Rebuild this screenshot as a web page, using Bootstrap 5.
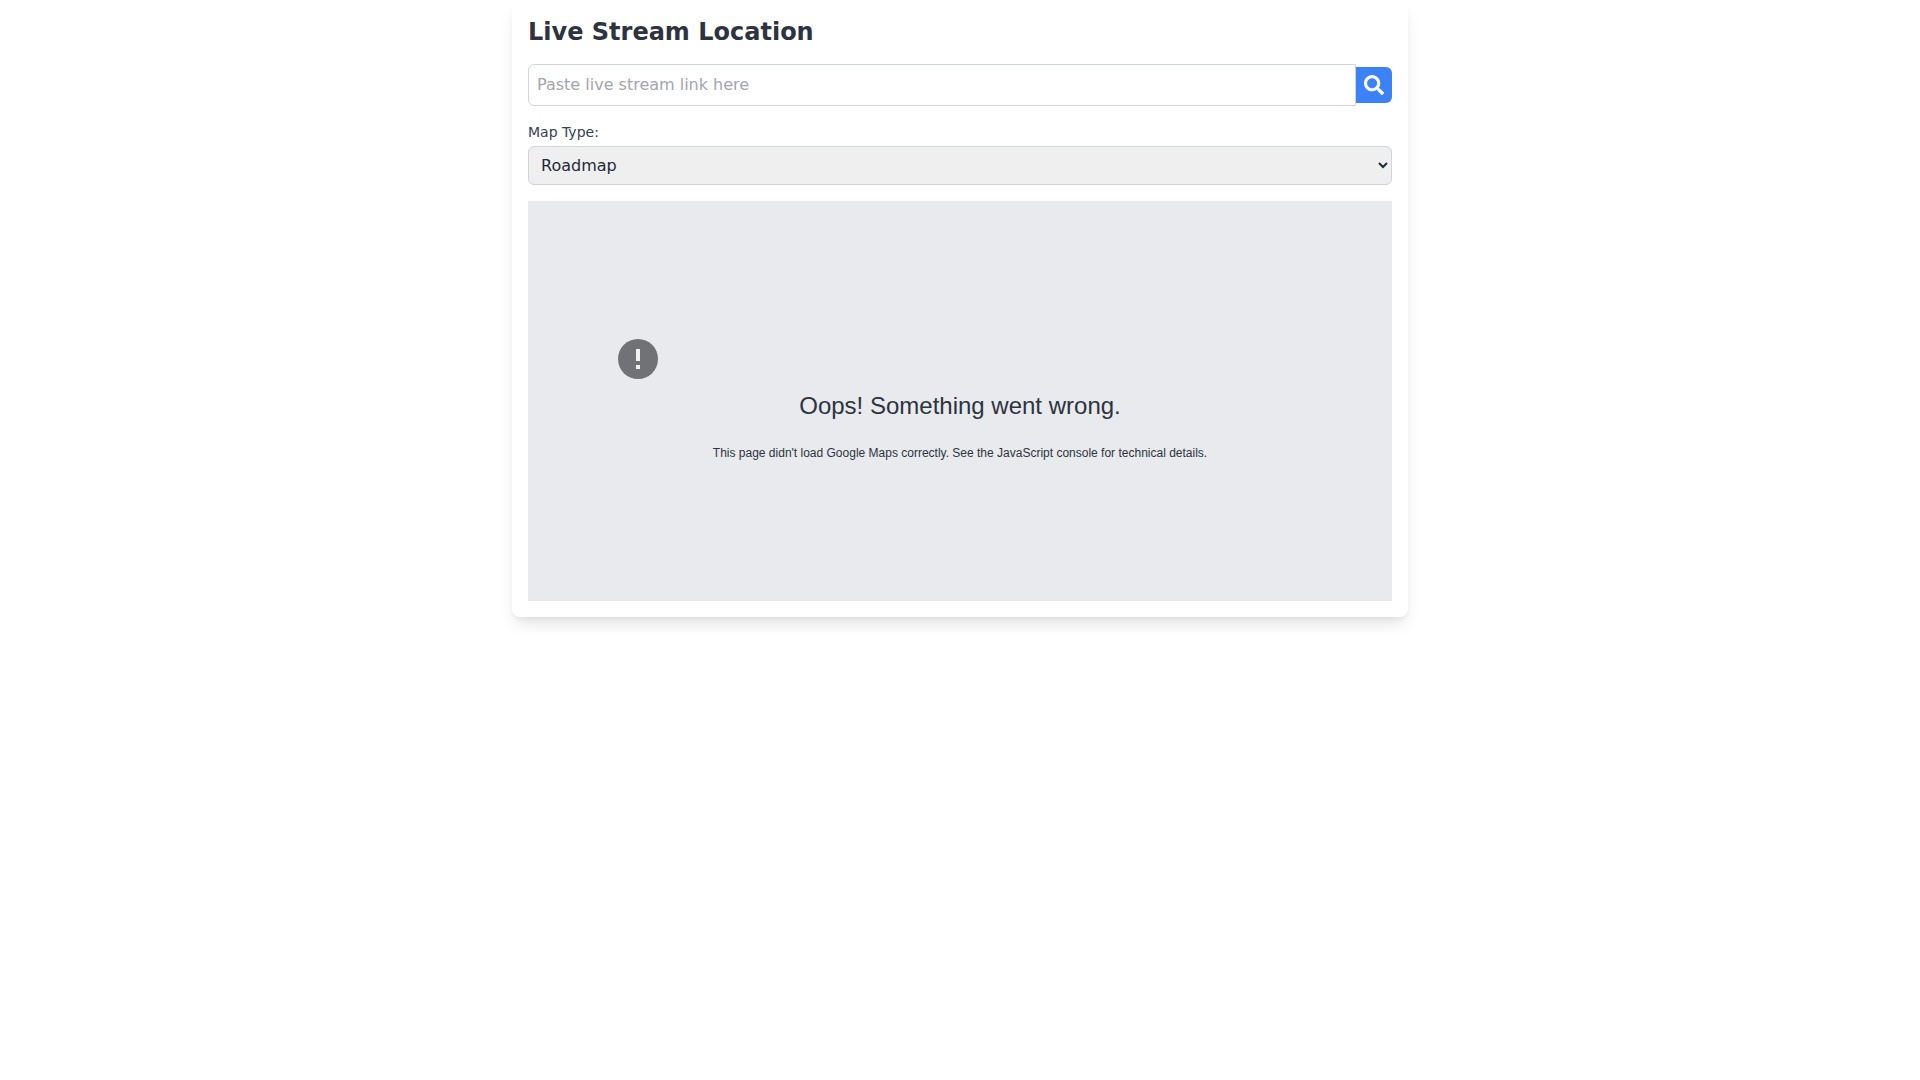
<!DOCTYPE html>
<html lang="en">
<head>
<meta charset="utf-8">
<meta name="viewport" content="width=device-width, initial-scale=1">
<title>Live Stream Location</title>
<link rel="stylesheet" href="https://cdn.jsdelivr.net/npm/bootstrap@5.3.0/dist/css/bootstrap.min.css">
<style>
body { font-family: "DejaVu Sans", sans-serif; font-size: 16px; line-height: 24px; color: #2d333f; background: #fff; }
.stream-panel { max-width: 896px; border-radius: 8px; box-shadow: 0 10px 15px -3px rgba(0,0,0,.1), 0 4px 6px -2px rgba(0,0,0,.05); }
.stream-title { font-size: 24px; line-height: 32px; }
.stream-link { padding: 8px; border: 1px solid #d1d5db; border-radius: 6px 0 0 6px; color: inherit; min-width: 0; }
.stream-link::placeholder { color: #a3a6ac; opacity: 1; }
.stream-search { padding: 8px; border-radius: 0 6px 6px 0; background: #3b82f6; color: #fff; line-height: 20px; }
.type-label { font-size: 14px; line-height: 20px; color: #374151; }
.type-select { height: 39px; padding: 8px; border: 1px solid #d1d5db; border-radius: 6px; background-color: #efefef; color: #1f2937; }
.map-area { height: 400px; background: #e8eaed; font-family: "Liberation Sans", sans-serif; }
.map-error { padding: 0 10% 6px; }
.error-title { font-size: 24px; line-height: 36px; margin: 5px 0 20px; }
.error-text { font-size: 12px; line-height: 18px; }
</style>
<script src="https://cdn.jsdelivr.net/npm/bootstrap@5.3.0/dist/js/bootstrap.bundle.min.js"></script>
</head>
<body class="min-vh-100">
<main class="stream-panel mx-auto p-3 bg-white">
  <h1 class="stream-title fw-bold mb-3">Live Stream Location</h1>
  <form class="d-flex align-items-center mb-3">
    <input class="stream-link flex-grow-1" type="text" placeholder="Paste live stream link here" aria-label="Live stream link">
    <button class="stream-search d-flex border-0" type="button" aria-label="Search">
      <svg width="20" height="20" viewBox="0 0 512 512" fill="currentColor" aria-hidden="true"><path d="M505 442.7L405.3 343c-4.5-4.5-10.6-7-17-7H372c27.6-35.3 44-79.7 44-128C416 93.1 322.9 0 208 0S0 93.1 0 208s93.1 208 208 208c48.3 0 92.7-16.4 128-44v16.3c0 6.4 2.5 12.5 7 17l99.7 99.7c9.4 9.4 24.6 9.4 33.9 0l28.3-28.3c9.4-9.4 9.4-24.6.1-34zM208 336c-70.7 0-128-57.2-128-128 0-70.7 57.2-128 128-128 70.7 0 128 57.2 128 128 0 70.7-57.2 128-128 128z"/></svg>
    </button>
  </form>
  <div class="mb-3">
    <label class="type-label d-block mb-1" for="mapType">Map Type:</label>
    <select class="type-select d-block w-100" id="mapType">
      <option>Roadmap</option>
      <option>Satellite</option>
      <option>Hybrid</option>
      <option>Terrain</option>
    </select>
  </div>
  <section class="map-area d-flex flex-column justify-content-center">
    <div class="map-error">
      <svg class="d-block" width="48" height="48" viewBox="0 0 24 24" aria-hidden="true"><path fill="#707276" d="M12 2a10 10 0 1 0 0 20 10 10 0 0 0 0-20z"/><path fill="#f1f1f1" d="M11 7h2v6h-2zM11 15h2v2h-2z"/></svg>
      <div class="error-title text-center">Oops! Something went wrong.</div>
      <div class="error-text text-center">This page didn't load Google Maps correctly. See the JavaScript console for technical details.</div>
    </div>
  </section>
</main>
</body>
</html>
